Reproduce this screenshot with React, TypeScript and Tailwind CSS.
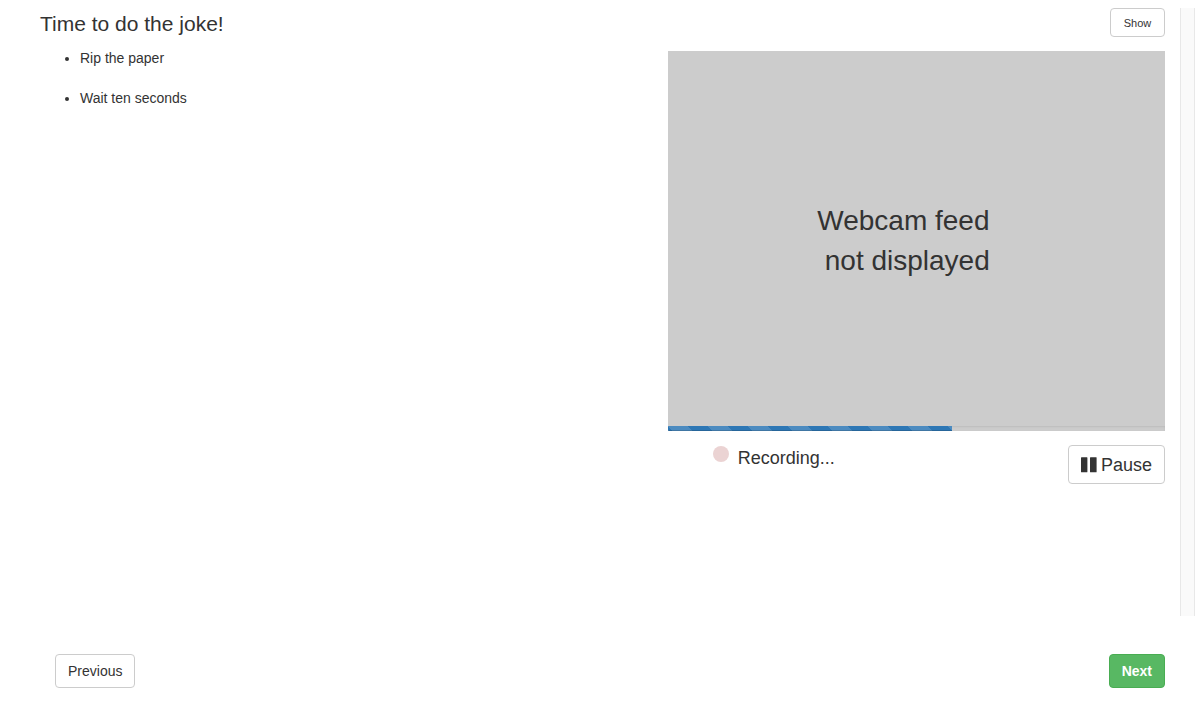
import React from "react";

const steps = ["Rip the paper", "Wait ten seconds"];

const defaultButton =
  "rounded border border-[#cccccc] bg-white text-[#333333] hover:bg-[#e6e6e6]";

function Instructions() {
  return (
    <section className="min-w-0 flex-1">
      <h1 className="mt-1 text-[21px] leading-6">Time to do the joke!</h1>
      <ul className="mt-3 flex list-disc flex-col gap-5 pl-10 text-sm leading-5">
        {steps.map((step) => (
          <li key={step}>{step}</li>
        ))}
      </ul>
    </section>
  );
}

function Recorder({ progress }: { progress: number }) {
  return (
    <section className="flex w-[44.2%] flex-col">
      <button
        type="button"
        className={`${defaultButton} h-[29px] min-w-[55px] self-end px-3 text-[11px] leading-4`}
      >
        Show
      </button>
      <div className="mt-[14px] flex h-[380px] flex-col bg-[#cccccc]">
        <p className="flex flex-1 flex-col justify-center pt-1 pr-[26px] text-center text-[28px] leading-10">
          <span>Webcam feed</span>
          <span>&nbsp;not displayed</span>
        </p>
        <div
          role="progressbar"
          aria-label="Recording progress"
          aria-valuenow={progress}
          aria-valuemin={0}
          aria-valuemax={100}
          className="h-[5px] overflow-hidden rounded-b-[1px] bg-[#cccccc] shadow-[inset_0_1px_2px_rgba(0,0,0,0.08)]"
        >
          <div
            className="h-full bg-[#2d77b5] bg-[linear-gradient(45deg,rgba(255,255,255,0.15)_25%,transparent_25%,transparent_50%,rgba(255,255,255,0.15)_50%,rgba(255,255,255,0.15)_75%,transparent_75%,transparent)] bg-[length:40px_40px] shadow-[inset_0_-1px_0_rgba(0,0,0,0.15)]"
            style={{ width: `${progress}%` }}
          />
        </div>
      </div>
      <div className="mt-[14px] flex items-start justify-between">
        <div className="flex items-start gap-[9px] pl-[45px] text-lg leading-[26px]">
          <span className="mt-px size-4 rounded-full bg-[#ebd3d3]" />
          <span>Recording...</span>
        </div>
        <button
          type="button"
          className={`${defaultButton} flex h-[39px] items-center gap-1 px-3 text-lg`}
        >
          <svg
            aria-hidden="true"
            viewBox="0 0 16 16"
            className="size-4 fill-current"
          >
            <rect x="0" y="0.3" width="6.4" height="15" rx="0.5" />
            <rect x="9" y="0.3" width="6.6" height="15" rx="0.5" />
          </svg>
          Pause
        </button>
      </div>
    </section>
  );
}

export default function App() {
  return (
    <div className="min-h-screen bg-white p-2 font-['Liberation_Sans',Arial,sans-serif] text-[#333333]">
      <div className="flex h-[608px]">
        <main className="flex min-w-0 flex-1 pr-[15px] pl-8">
          <Instructions />
          <Recorder progress={57.1} />
        </main>
        <div className="w-[15px] border-x border-[#e8e8e8] bg-[#fafafa]" />
      </div>
      <nav className="mt-[38px] flex justify-between pr-[30px] pl-[47px] text-sm">
        <button type="button" className={`${defaultButton} h-[34px] px-3`}>
          Previous
        </button>
        <button
          type="button"
          className="h-[34px] rounded border border-[#49ad52] bg-[#58b863] px-3 font-bold text-white hover:bg-[#449d44]"
        >
          Next
        </button>
      </nav>
    </div>
  );
}
